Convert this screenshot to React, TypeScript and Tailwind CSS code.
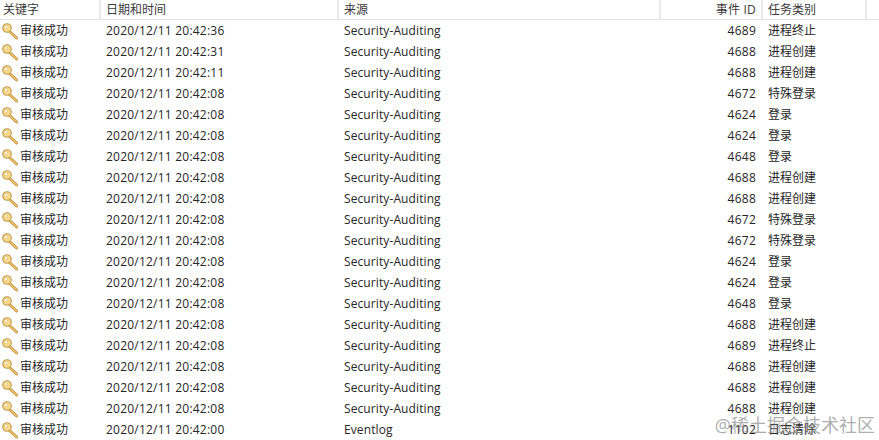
import React from 'react';

const font = "font-['Segoe_UI','Open_Sans','Noto_Sans_CJK_SC',sans-serif]";

const rows: [string, string, number, string][] = [
  ['20:42:36', 'Security-Auditing', 4689, '进程终止'],
  ['20:42:31', 'Security-Auditing', 4688, '进程创建'],
  ['20:42:11', 'Security-Auditing', 4688, '进程创建'],
  ['20:42:08', 'Security-Auditing', 4672, '特殊登录'],
  ['20:42:08', 'Security-Auditing', 4624, '登录'],
  ['20:42:08', 'Security-Auditing', 4624, '登录'],
  ['20:42:08', 'Security-Auditing', 4648, '登录'],
  ['20:42:08', 'Security-Auditing', 4688, '进程创建'],
  ['20:42:08', 'Security-Auditing', 4688, '进程创建'],
  ['20:42:08', 'Security-Auditing', 4672, '特殊登录'],
  ['20:42:08', 'Security-Auditing', 4672, '特殊登录'],
  ['20:42:08', 'Security-Auditing', 4624, '登录'],
  ['20:42:08', 'Security-Auditing', 4624, '登录'],
  ['20:42:08', 'Security-Auditing', 4648, '登录'],
  ['20:42:08', 'Security-Auditing', 4688, '进程创建'],
  ['20:42:08', 'Security-Auditing', 4689, '进程终止'],
  ['20:42:08', 'Security-Auditing', 4688, '进程创建'],
  ['20:42:08', 'Security-Auditing', 4688, '进程创建'],
  ['20:42:08', 'Security-Auditing', 4688, '进程创建'],
  ['20:42:00', 'Eventlog', 1102, '日志清除'],
];

const KeyIcon = () => (
  <svg width="18" height="18" viewBox="0 0 18 18" className="shrink-0">
    <path d="M7.5 8.5 L15.6 16" stroke="#b58a3c" strokeWidth="2.8" strokeLinecap="round" />
    <path d="M7.5 8.5 L15.6 16" stroke="#f4c766" strokeWidth="1.4" strokeLinecap="round" />
    <circle cx="6" cy="6" r="4.3" fill="#f7d98c" stroke="#c39a4c" strokeWidth="1.1" />
    <circle cx="5" cy="5" r="1.6" fill="#fff8e3" stroke="#d9b56c" strokeWidth="0.5" />
  </svg>
);

const Head = ({ label, className = '' }: { label: string; className?: string }) => (
  <div className={`border-r-2 border-[#e9e9e9] text-[#3a3a3a] ${className}`}>{label}</div>
);

export default function App() {
  return (
    <div className={`relative w-[879px] h-[440px] overflow-hidden bg-white text-[12px] text-[#262626] ${font}`}>
      <div className="grid grid-cols-[101px_238px_322px_102px_104px_1fr] h-[20px] leading-[19px] border-b border-[#e4e4e4]">
        <Head label="关键字" className="pl-[3px]" />
        <Head label="日期和时间" className="pl-[5px]" />
        <Head label="来源" className="pl-[5px]" />
        <Head label="事件 ID" className="pr-[5px] text-right tracking-[0.2px]" />
        <Head label="任务类别" className="pl-[5px]" />
        <div />
      </div>
      <div className="flex flex-col">
        {rows.map((r, i) => (
          <div key={i} className="grid grid-cols-[101px_238px_322px_102px_1fr] h-[21px] items-center leading-[21px]">
            <div className="flex items-center pl-[1px]">
              <KeyIcon />
              <span className="ml-[1px]">审核成功</span>
            </div>
            <div className="pl-[5px] tracking-[0.22px]">2020/12/11 {r[0]}</div>
            <div className="pl-[5px] tracking-[0.1px]">{r[1]}</div>
            <div className="pr-[7px] text-right tracking-[0.25px]">{r[2]}</div>
            <div className="pl-[5px]">{r[3]}</div>
          </div>
        ))}
      </div>
      <div className="absolute right-[4px] top-[412px] text-[18px] leading-[26px] text-[#8a8a8a]/70">@稀土掘金技术社区</div>
    </div>
  );
}
